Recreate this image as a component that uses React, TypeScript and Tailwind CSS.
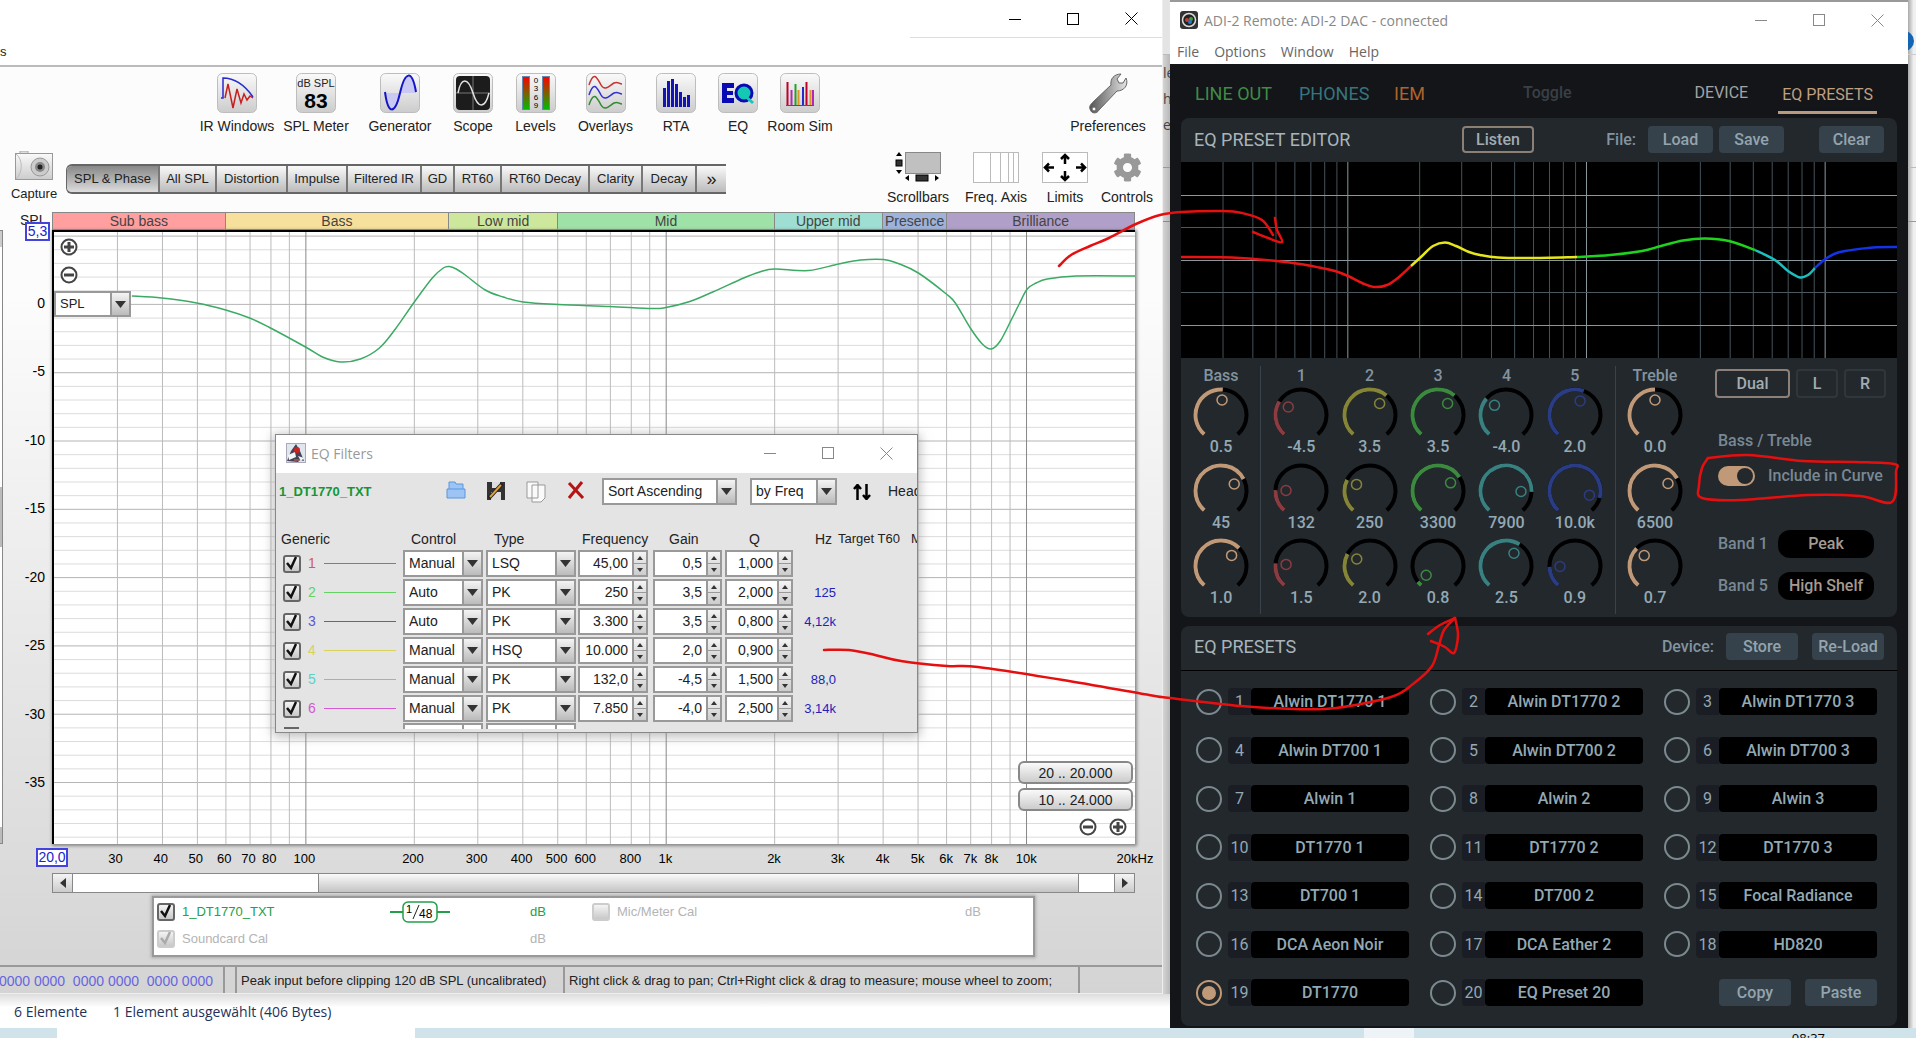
import React, { useId } from 'react'
import clsx from 'clsx'
import { FaCog } from 'react-icons/fa'

type Point = [number, number]

// Catmull-Rom spline through the given points
const smooth = (pts: Point[]) => {
    let d = `M${pts[0][0]} ${pts[0][1]}`
    for (let i = 0; i < pts.length - 1; i++) {
        const p0 = pts[i - 1] ?? pts[i]
        const p1 = pts[i]
        const p2 = pts[i + 1]
        const p3 = pts[i + 2] ?? p2
        d += ` C${p1[0] + (p2[0] - p0[0]) / 6} ${p1[1] + (p2[1] - p0[1]) / 6}`
        d += ` ${p2[0] - (p3[0] - p1[0]) / 6} ${p2[1] - (p3[1] - p1[1]) / 6} ${p2[0]} ${p2[1]}`
    }
    return d
}

const freqPos = (f: number) => (Math.log10(f / 20) / 3) * 100
const dbPos = (db: number) => ((5.3 - db) / 44.8) * 100

const decades = [10, 100, 1000, 10000]
const gridFreqs = decades
    .flatMap((d) => [1, 2, 3, 4, 5, 6, 7, 8, 9].map((n) => n * d))
    .filter((f) => f > 20 && f < 20000)

const freqLabels: [number, string][] = [
    [30, '30'], [40, '40'], [50, '50'], [60, '60'], [70, '70'], [80, '80'], [100, '100'],
    [200, '200'], [300, '300'], [400, '400'], [500, '500'], [600, '600'], [800, '800'],
    [1000, '1k'], [2000, '2k'], [3000, '3k'], [4000, '4k'], [5000, '5k'], [6000, '6k'],
    [7000, '7k'], [8000, '8k'], [10000, '10k'],
]

const bands = [
    { name: 'Sub bass', grow: 173, color: 'bg-[#ff9f9f]' },
    { name: 'Bass', grow: 224, color: 'bg-[#f7e09c]' },
    { name: 'Low mid', grow: 109, color: 'bg-[#cde89c]' },
    { name: 'Mid', grow: 217, color: 'bg-[#9fe2a8]' },
    { name: 'Upper mid', grow: 108, color: 'bg-[#9fded2]' },
    { name: 'Presence', grow: 64, color: 'bg-[#9fb2da]' },
    { name: 'Brilliance', grow: 188, color: 'bg-[#b09fc8]' },
]

const response: Point[] = [
    [131, 296], [161, 298], [196, 303], [225, 310], [249, 318], [268, 327], [305, 347], [322, 357],
    [340, 362], [360, 359], [379, 348], [395, 329], [414, 302], [432, 278], [443, 268], [449, 266.5], [456, 269],
    [465, 275], [485, 290], [503, 297], [523, 302], [558, 304.5], [610, 306.5], [652, 308.5], [666, 307.5],
    [690, 301.5], [713, 292], [744, 278], [760, 272], [775, 269], [809, 270.5], [839, 264], [861, 260],
    [884, 259.5], [900, 264], [919, 273], [947, 294], [956, 303], [971, 328], [983, 344], [992, 349],
    [1001, 341], [1012, 320], [1020, 304], [1028, 289], [1037, 283], [1048, 279], [1077, 276], [1136, 276],
]

const WindowControls = ({ className, dark }: { className?: string; dark?: boolean }) => (
    <div className={clsx('flex items-center', dark ? 'text-black' : 'text-[#888]', className)}>
        <button aria-label="Minimize" className="w-[58px] flex justify-center">
            <svg width="12" height="12"><path d="M0 6.5H12" stroke="currentColor" /></svg>
        </button>
        <button aria-label="Maximize" className="w-[58px] flex justify-center">
            <svg width="12" height="12"><rect x=".5" y=".5" width="11" height="11" fill="none" stroke="currentColor" /></svg>
        </button>
        <button aria-label="Close" className="w-[58px] flex justify-center">
            <svg width="13" height="13"><path d="M.5 .5L12.5 12.5M12.5 .5L.5 12.5" stroke="currentColor" /></svg>
        </button>
    </div>
)

const Tile = ({ children }: { children: React.ReactNode }) => (
    <svg width="40" height="40" viewBox="0 0 40 40">
        <rect x=".5" y=".5" width="39" height="39" rx="5" fill="url(#tile)" stroke="#bdbdbd" />
        {children}
    </svg>
)

const tools = [
    {
        name: 'IR Windows', width: 'w-[80px]',
        icon: <Tile>
            <path d="M4 25H6V5C16 5 27 11 36 24" fill="none" stroke="#2a2ad0" strokeWidth="1.5" />
            <path d="M8 25L11 11L16 35L20 16L24 30L27 21L30 27L33 23L36 25" fill="none" stroke="#c81e1e" strokeWidth="1.5" />
        </Tile>,
    },
    {
        name: 'SPL Meter', width: 'w-[78px]',
        icon: <Tile>
            <text x="20" y="14" textAnchor="middle" fontSize="11" fill="#222">dB SPL</text>
            <text x="20" y="35" textAnchor="middle" fontSize="21" fontWeight="bold">83</text>
        </Tile>,
    },
    {
        name: 'Generator', width: 'w-[90px]',
        icon: <Tile>
            <path d="M5 20C8 40 15 40 20 20Z M20 20C25 -2 32 -2 36 20Z" fill="#c9c9f4" />
            <path d="M5 19C8 42 15 42 20 20S32 -4 36 19" fill="none" stroke="#1414c8" strokeWidth="2" />
        </Tile>,
    },
    {
        name: 'Scope', width: 'w-[56px]',
        icon: <Tile>
            <rect x="3" y="3" width="34" height="34" rx="4" fill="#1c1c1c" />
            <path d="M3 20H37M20 3V37" stroke="#777" />
            <path d="M5 20C8 4 15 4 20 20S32 36 36 20" fill="none" stroke="#e2e2e2" strokeWidth="1.5" />
        </Tile>,
    },
    {
        name: 'Levels', width: 'w-[69px]',
        icon: <Tile>
            <rect x="6.500" y="3.500" width="7" height="33" fill="url(#level)" stroke="#68a" />
            <rect x="26.500" y="3.500" width="7" height="33" fill="url(#level)" stroke="#68a" />
            <text x="20" y="10" textAnchor="middle" fontSize="8">0</text>
            <text x="20" y="18" textAnchor="middle" fontSize="8">3</text>
            <text x="20" y="27" textAnchor="middle" fontSize="8">6</text>
            <text x="20" y="35" textAnchor="middle" fontSize="8">9</text>
        </Tile>,
    },
    {
        name: 'Overlays', width: 'w-[71px]',
        icon: <Tile>
            <path d="M3 12C8 -3 11 5 15 12S24 12 28 10S33 11 36 11" fill="none" stroke="#c83232" strokeWidth="1.500" />
            <path d="M3 22C8 7 11 15 15 22S24 22 28 20S33 21 36 21" fill="none" stroke="#3232d0" strokeWidth="1.500" />
            <path d="M3 32C8 17 11 25 15 32S24 32 28 30S33 31 36 31" fill="none" stroke="#328c32" strokeWidth="1.500" />
        </Tile>,
    },
    {
        name: 'RTA', width: 'w-[70px]',
        icon: <Tile>
            <path d="M8.500 34V15M12.500 34V8M16.500 34V6M20.500 34V11M24.500 34V19M28.500 34V24M32.500 34V22" stroke="#1414b4" strokeWidth="3" />
        </Tile>,
    },
    {
        name: 'EQ', width: 'w-[54px]',
        icon: <Tile>
            <path d="M4 10H16V15H9V18H15V22H9V25H16V30H4Z" fill="#0a0ab4" />
            <circle cx="26" cy="20" r="8" fill="#14c8b4" stroke="#0a0ab4" strokeWidth="3" />
            <path d="M26 22L35 30" stroke="#14c8b4" strokeWidth="3" />
        </Tile>,
    },
    {
        name: 'Room Sim', width: 'w-[70px]',
        icon: <Tile>
            <path d="M7.500 32V9M26.500 32V9" stroke="#c00028" strokeWidth="2" />
            <path d="M11.500 32V17M33 32V17" stroke="#b428b4" strokeWidth="2" />
            <path d="M15.500 32V11" stroke="#28a028" strokeWidth="2" />
            <path d="M18.500 32V17M30.500 32V17" stroke="#dc9628" strokeWidth="2" />
            <path d="M23 32V14" stroke="#2828c8" strokeWidth="2" />
            <path d="M6 32.500H34" stroke="#555" />
        </Tile>,
    },
]

const Wrench = () => (
    <svg width="42" height="42" viewBox="0 0 42 42">
        <path
            d="M3 36C2 33 4 31 6 29L24 12C23 6 27 1 34 1L30 6L32 10L36 10L39 5C42 12 37 18 30 18L12 37C10 41 4 41 3 36Z"
            fill="url(#metal)" stroke="#666" />
        <circle cx="7" cy="36" r="2" fill="#fafafa" stroke="#666" />
    </svg>
)

const Camera = () => (
    <svg width="38" height="30" viewBox="0 0 38 30">
        <rect x="5" y="0" width="8" height="4" fill="#ddd" stroke="#aaa" />
        <rect x=".5" y="2.500" width="37" height="26" fill="url(#tile)" stroke="#999" />
        <path d="M1 3C8 8 8 22 1 28" fill="none" stroke="#bbb" />
        <circle cx="25" cy="16" r="9" fill="#ccc" stroke="#999" />
        <circle cx="25" cy="16" r="5" fill="#888" />
        <circle cx="25" cy="16" r="2.500" fill="#222" />
    </svg>
)

const chartTools = [
    {
        name: 'Scrollbars', width: 'w-[78px]',
        icon: <svg width="46" height="31" viewBox="0 0 46 31">
            <rect x="10.500" y=".5" width="35" height="21" fill="#c0c0c0" stroke="#888" />
            <path d="M1 4L4 0L7 4ZM1 18L4 22L7 18ZM14 23V29L10 26ZM40 23V29L44 26Z" />
            <rect x="1" y="8" width="6" height="6" fill="#333" stroke="#000" />
            <rect x="21" y="23" width="12" height="6" fill="#333" stroke="#000" />
        </svg>,
    },
    {
        name: 'Freq. Axis', width: 'w-[78px]',
        icon: <svg width="46" height="31" viewBox="0 0 46 31">
            <rect x=".5" y=".5" width="45" height="30" fill="#fff" stroke="#bbb" />
            <path d="M17.500 1V30M27.500 1V30M35.500 1V30M40.500 1V30" stroke="#bbb" />
        </svg>,
    },
    {
        name: 'Limits', width: 'w-[60px]',
        icon: <svg width="46" height="31" viewBox="0 0 46 31">
            <rect x=".5" y=".5" width="45" height="30" fill="#fff" stroke="#bbb" />
            <path d="M23 12V4M19 7L23 3L27 7M23 19V27M19 24L23 28L27 24M12 15.500H4M7 11.500L3 15.500L7 19.500M34 15.500H42M39 11.500L43 15.500L39 19.500" fill="none" stroke="#000" strokeWidth="2.500" />
        </svg>,
    },
    {
        name: 'Controls', width: 'w-[64px]',
        icon: <span className="h-[31px] flex items-center"><FaCog size={29} color="#999" /></span>,
    },
]

const tabs = [
    ['SPL & Phase', 'w-[93px]'], ['All SPL', 'w-[57px]'], ['Distortion', 'w-[71px]'],
    ['Impulse', 'w-[60px]'], ['Filtered IR', 'w-[74px]'], ['GD', 'w-[33px]'], ['RT60', 'w-[47px]'],
    ['RT60 Decay', 'w-[88px]'], ['Clarity', 'w-[53px]'], ['Decay', 'w-[54px]'],
]

const Check = ({ disabled, checked = true, label }: { disabled?: boolean; checked?: boolean; label: React.ReactNode }) => {
    const id = useId()
    return (
        <span className="flex items-center gap-[7px]">
            <span className="grid shrink-0">
                <input
                    id={id} type="checkbox" defaultChecked={checked} disabled={disabled}
                    className={clsx(
                        'col-start-1 row-start-1 size-[18px] appearance-none rounded-[3px] border-2 bg-linear-to-b from-[#f4f4f4] to-[#c8c8c8]',
                        disabled ? 'border-[#ccc]' : 'border-[#666]')}
                />
                {checked && (
                    <svg className="col-start-1 row-start-1 pointer-events-none" width="18" height="18">
                        <path d="M4 8L8 13L13 2" fill="none" stroke={disabled ? '#aaa' : '#111'} strokeWidth="2.500" />
                    </svg>
                )}
            </span>
            <label htmlFor={id}>{label}</label>
        </span>
    )
}

const Combo = ({ value, label, className }: { value: string; label: string; className?: string }) => (
    <span className={clsx('block border-2 border-[#999] bg-white', className)}>
        <select aria-label={label} className="block size-full appearance-none pl-1 outline-none">
            <option>{value}</option>
        </select>
        <span className="absolute inset-y-0 right-0 w-[19px] border-l-2 border-[#999] bg-linear-to-b from-[#f4f4f4] to-[#bbb] pointer-events-none flex items-center justify-center">
            <svg width="11" height="7"><path d="M0 0H11L5.500 7Z" fill="#333" /></svg>
        </span>
    </span>
)

const Spinner = ({ value, label, className }: { value: string; label: string; className?: string }) => (
    <span className={clsx('flex h-[27px] border-2 border-[#999] bg-white', className)}>
        <input aria-label={label} defaultValue={value} className="min-w-0 flex-1 text-right pr-1 outline-none" />
        <span className="flex flex-col w-[14px] border-l-2 border-[#999] bg-linear-to-b from-[#f4f4f4] to-[#ccc]">
            <button aria-label={`${label} up`} className="flex-1 flex items-center justify-center border-b border-[#999]">
                <svg width="6" height="4"><path d="M0 4H6L3 0Z" fill="#333" /></svg>
            </button>
            <button aria-label={`${label} down`} className="flex-1 flex items-center justify-center">
                <svg width="6" height="4"><path d="M0 0H6L3 4Z" fill="#333" /></svg>
            </button>
        </span>
    </span>
)

const ZoomButton = ({ plus }: { plus?: boolean }) => (
    <button aria-label={plus ? 'Zoom in' : 'Zoom out'} className="block">
        <svg width="18" height="18">
            <circle cx="9" cy="9" r="7.500" fill="#fff" stroke="#444" strokeWidth="2" />
            <path d={plus ? 'M4 9H14M9 4V14' : 'M4 9H14'} stroke="#444" strokeWidth="3" />
        </svg>
    </button>
)

const Plot = () => (
    <div className="relative border-l-2 border-t-2 border-black bg-white shadow-[1px_1px_3px_1px_#888]">
        <svg className="absolute inset-0 size-full">
            {Array.from({ length: 45 }, (_, i) => 5 - i).map((db) => (
                <line
                    key={db} x1="0" x2="100%" y1={`${dbPos(db)}%`} y2={`${dbPos(db)}%`}
                    stroke={db % 5 === 0 ? '#b4b4b4' : '#dcdcdc'} />
            ))}
            {gridFreqs.map((f) => (
                <line
                    key={f} x1={`${freqPos(f)}%`} x2={`${freqPos(f)}%`} y1="0" y2="100%"
                    stroke={decades.includes(f) ? '#888' : '#bcbcbc'} />
            ))}
            <svg viewBox="53 232 1083 612" preserveAspectRatio="none" width="100%" height="100%">
                <path d={smooth(response)} fill="none" stroke="#3caa64" strokeWidth="1.500" vectorEffect="non-scaling-stroke" />
            </svg>
        </svg>
        <div className="absolute left-[6px] top-[6px] flex flex-col gap-[10px]">
            <ZoomButton plus />
            <ZoomButton />
        </div>
        <Combo value="SPL" label="Trace axis" className="absolute left-0 top-[59px] w-[77px] h-[26px] text-[13px]" />
        <div className="absolute right-[2px] bottom-2 flex flex-col items-end gap-1">
            {['20 .. 20.000', '10 .. 24.000'].map((range) => (
                <button key={range} className="w-[115px] h-[23px] rounded-md border-2 border-[#888] bg-linear-to-b from-[#fafafa] to-[#ccc] text-[14px] leading-none">
                    {range}
                </button>
            ))}
            <div className="flex gap-3 pt-[3px] pr-[6px]">
                <ZoomButton />
                <ZoomButton plus />
            </div>
        </div>
    </div>
)

const RoomWindow = () => (
    <section className="flex-1 min-w-0 flex flex-col text-[#222] font-['Liberation_Sans',Arial,sans-serif] border-b border-r border-[#eee]">
        <header className="bg-white h-[65px] shrink-0">
            <div className="flex justify-end h-[38px]">
                <div className="w-[252px] border-b border-[#ddd] flex justify-end">
                    <WindowControls dark className="pr-[2px]" />
                </div>
            </div>
            <span className="block text-[13px] leading-7">s</span>
        </header>
        <div className="flex-1 min-h-0 flex flex-col border-t-2 border-[#bbb] bg-linear-to-b from-[#fcfcfc] from-25% to-[#d4d4d4]">
            <div className="flex justify-between pt-[6px] pl-[197px] pr-[15px] text-[14px] leading-5">
                <div className="flex">
                    {tools.map((tool) => (
                        <button key={tool.name} className={clsx('flex flex-col items-center gap-[3px] whitespace-nowrap', tool.width)}>
                            {tool.icon}
                            {tool.name}
                        </button>
                    ))}
                </div>
                <button className="flex flex-col items-center gap-px w-[78px]">
                    <Wrench />
                    Preferences
                </button>
            </div>
            <div className="flex items-end mt-[15px] pr-[3px] text-[13px] leading-5">
                <button className="w-[66px] flex flex-col items-center pb-1 pl-[2px] gap-[3px]">
                    <Camera />
                    Capture
                </button>
                <nav className="flex h-[30px] mb-[14px] border-y-2 border-[#666] border-l rounded-l-md overflow-hidden bg-linear-to-b from-[#fafafa] to-[#bbb]">
                    {tabs.map(([name, width], i) => (
                        <button
                            key={name}
                            className={clsx('border-r-2 border-[#777] whitespace-nowrap', width,
                                i === 0 && 'bg-linear-to-b from-[#888] to-[#ddd]')}>
                            {name}
                        </button>
                    ))}
                    <button aria-label="More graphs" className="w-[29px] text-lg leading-none">»</button>
                </nav>
                <div className="flex ml-auto">
                    {chartTools.map((tool) => (
                        <button key={tool.name} className={clsx('flex flex-col items-center gap-1 pb-px text-[14px] whitespace-nowrap', tool.width)}>
                            {tool.icon}
                            {tool.name}
                        </button>
                    ))}
                </div>
            </div>

            <div className="flex-1 min-h-0 mt-1 grid grid-cols-[52px_1fr_27px] grid-rows-[18px_1fr_29px]">
                <span className="text-[14px] leading-4 pl-5">SPL</span>
                <div className="flex border-y border-l border-[#888] text-[14px] leading-4 text-[#444]">
                    {bands.map((band) => (
                        <div
                            key={band.name} style={{ flexGrow: band.grow }}
                            className={clsx('basis-0 min-w-0 text-center border-r border-[#888] whitespace-nowrap', band.color)}>
                            {band.name}
                        </div>
                    ))}
                </div>
                <span />

                <div className="relative">
                    <div className="absolute left-0 inset-y-0 w-[3px] border-r border-y border-[#888] bg-white flex flex-col">
                        <span className="h-4 bg-[#ccc]" />
                        <span className="h-[60px] mt-[240px] bg-[#bbb]" />
                        <span className="h-4 mt-auto bg-[#bbb]" />
                    </div>
                    <svg className="size-full text-[14px]">
                        {[0, -5, -10, -15, -20, -25, -30, -35].map((db) => (
                            <text key={db} x="45" y={`${dbPos(db)}%`} dy="5" textAnchor="end">{db}</text>
                        ))}
                    </svg>
                    <input
                        aria-label="Upper limit" defaultValue="5,3"
                        className="absolute right-[2px] -top-2 w-[25px] h-[19px] border-2 border-[#44d] bg-white text-[#22c] text-[14px] text-center" />
                </div>
                <Plot />
                <span />

                <span />
                <div className="relative">
                    <svg className="size-full text-[13px] overflow-visible">
                        {freqLabels.map(([f, text]) => (
                            <text key={f} x={`${freqPos(f)}%`} y="19" textAnchor="middle">{text}</text>
                        ))}
                        <text x="100%" y="19" textAnchor="middle">20kHz</text>
                    </svg>
                    <input
                        aria-label="Lower limit" defaultValue="20,0"
                        className="absolute -left-4 top-1 w-8 h-[19px] border-2 border-[#44d] bg-white text-[#22c] text-[14px] text-center" />
                </div>
            </div>

            <div className="flex h-5 shrink-0 ml-[52px] mr-[27px] border border-[#888] bg-white">
                <button aria-label="Scroll left" className="w-5 border-r border-[#888] bg-linear-to-b from-[#f4f4f4] to-[#ccc] flex items-center justify-center">
                    <svg width="6" height="10"><path d="M6 0V10L0 5Z" fill="#333" /></svg>
                </button>
                <div className="w-[245px]" />
                <div className="flex-1 border-x border-[#888] bg-linear-to-b from-[#fafafa] to-[#c4c4c4]" />
                <div className="w-[35px]" />
                <button aria-label="Scroll right" className="w-5 border-l border-[#888] bg-linear-to-b from-[#f4f4f4] to-[#ccc] flex items-center justify-center">
                    <svg width="6" height="10"><path d="M0 0V10L6 5Z" fill="#333" /></svg>
                </button>
            </div>

            <div className="ml-[152px] mr-[127px] mt-[3px] mb-2 h-[61px] shrink-0 border-2 border-[#999] bg-white shadow-[0_0_3px_1px_#aaa] text-[13px] leading-4 grid grid-cols-[209px_164px_62px_373px_1fr] grid-rows-2 items-center pl-[3px] pb-[2px] text-[#b4b4b4]">
                <span className="text-[#22a04a]"><Check label="1_DT1770_TXT" /></span>
                <span className="pl-[24px]">
                    <svg width="60" height="22" viewBox="0 0 60 22">
                        <path d="M0 11H60" stroke="#22a04a" strokeWidth="2" />
                        <rect x="13" y="1" width="34" height="20" rx="5" fill="#fff" stroke="#22a04a" strokeWidth="1.500" />
                        <text x="16" y="12" fontSize="11">1</text>
                        <path d="M23 18L29 4" stroke="#222" />
                        <text x="29" y="17" fontSize="12">48</text>
                    </svg>
                </span>
                <span className="text-[#22a04a]">dB</span>
                <Check disabled checked={false} label="Mic/Meter Cal" />
                <span>dB</span>
                <Check disabled label="Soundcard Cal" />
                <span />
                <span>dB</span>
            </div>

            <footer className="flex h-[28px] shrink-0 border-t-2 border-[#999] text-[13px] leading-7 whitespace-pre">
                <span className="w-[225px] flex justify-end pr-[10px] border-r-2 border-[#999] text-[#6666e0] text-[14px] overflow-hidden">0000 0000  0000 0000  0000 0000</span>
                <span className="w-3 border-r-2 border-[#999]" />
                <span className="w-[328px] pl-1 border-r-2 border-[#999]">Peak input before clipping 120 dB SPL (uncalibrated)</span>
                <span className="w-[515px] pl-1 border-r-2 border-[#999]">Right click &amp; drag to pan; Ctrl+Right click &amp; drag to measure; mouse wheel to zoom;</span>
            </footer>
        </div>
    </section>
)

const filters = [
    { color: '#d25a5a', control: 'Manual', type: 'LSQ', freq: '45,00', gain: '0,5', q: '1,000', hz: '' },
    { color: '#64d264', control: 'Auto', type: 'PK', freq: '250', gain: '3,5', q: '2,000', hz: '125' },
    { color: '#5a5ad2', control: 'Auto', type: 'PK', freq: '3.300', gain: '3,5', q: '0,800', hz: '4,12k' },
    { color: '#d8d25a', control: 'Manual', type: 'HSQ', freq: '10.000', gain: '2,0', q: '0,900', hz: '' },
    { color: '#5ad2c8', control: 'Manual', type: 'PK', freq: '132,0', gain: '-4,5', q: '1,500', hz: '88,0' },
    { color: '#d25ad2', control: 'Manual', type: 'PK', freq: '7.850', gain: '-4,0', q: '2,500', hz: '3,14k' },
]

const FiltersDialog = () => (
    <section className="absolute left-[275px] top-[434px] w-[643px] h-[299px] border border-[#888] bg-[#e4e4e4] shadow-[0_2px_10px_2px_#8888] overflow-hidden text-[14px] text-[#222] font-['Liberation_Sans',Arial,sans-serif]">
        <header className="bg-white h-[38px] flex items-center pl-[10px] pb-[2px] text-[#999] font-['Open_Sans','Noto_Sans',sans-serif]">
            <svg width="20" height="20" className="mr-[5px]">
                <rect x=".5" y=".5" width="19" height="19" fill="#dfe6ee" stroke="#aab" />
                <path d="M1 18L5 8L10 1L14 8L18 18L14 17L12 19Z" fill="#445" />
                <path d="M2 12L9 9L10 14L3 17ZM12 13L18 15L15 18Z" fill="#f4f6f8" />
                <circle cx="11" cy="7" r="3" fill="#c22" />
                <path d="M8 17H14" stroke="#c66" />
            </svg>
            EQ Filters
            <WindowControls className="ml-auto pr-[2px]" />
        </header>
        <div className="flex items-center h-[27px] mt-[5px] pl-[3px] whitespace-nowrap">
            <span className="w-[156px] shrink-0 font-bold text-[13px] text-[#149637]">1_DT1770_TXT</span>
            <div className="flex w-[167px] shrink-0">
                <button aria-label="Open" className="w-[41px] flex justify-center">
                    <svg width="20" height="18"><path d="M3 8V1H9L10 3H17V8M1 8H19V17H1Z" fill="#9cc4f4" stroke="#5a96dc" /></svg>
                </button>
                <button aria-label="Save" className="w-10 flex justify-center">
                    <svg width="20" height="20">
                        <path d="M1 1H19V19H1Z" fill="#333" />
                        <path d="M6 1H14V7H6ZM5 11H15V19H5Z" fill="#ddd" />
                        <path d="M3 17L16 3" stroke="#222" strokeWidth="4" />
                        <path d="M4 16L15 4" stroke="#dca03c" strokeWidth="2" />
                    </svg>
                </button>
                <button aria-label="Copy" className="w-10 flex justify-center">
                    <svg width="20" height="22">
                        <path d="M1 1H12V17H1ZM6 4H19V17L15 21H6Z" fill="#fafafa" stroke="#999" />
                    </svg>
                </button>
                <button aria-label="Delete" className="w-10 flex justify-center">
                    <svg width="20" height="18"><path d="M3 2L17 17M16 1L3 17" stroke="#b41414" strokeWidth="3" /></svg>
                </button>
            </div>
            <Combo value="Sort Ascending" label="Sort order" className="relative w-[135px] h-[27px] shrink-0" />
            <Combo value="by Freq" label="Sort key" className="relative w-[87px] h-[27px] ml-[13px] shrink-0" />
            <button aria-label="Swap" className="ml-[16px] mr-[17px] shrink-0">
                <svg width="18" height="16"><path d="M4.500 16V2M1 5L4.500 1L8 5M13.500 0V14M10 11L13.500 15L17 11" fill="none" stroke="#000" strokeWidth="2.500" /></svg>
            </button>
            Head
        </div>
        <table className="table-fixed w-[680px] mt-[24px] text-left">
            <thead>
                <tr className="h-[20px] leading-5 whitespace-nowrap *:font-normal">
                    <th className="w-[127px] pl-[5px]">Generic</th>
                    <th className="w-[83px] pl-2">Control</th>
                    <th className="w-[92px] pl-2">Type</th>
                    <th className="w-[75px] pl-1">Frequency</th>
                    <th className="w-[72px] pl-4">Gain</th>
                    <th className="w-[70px] pl-6">Q</th>
                    <th className="w-[43px] pr-[6px] text-right">Hz</th>
                    <th className="w-[73px] text-[13px]">Target T60</th>
                    <th className="text-[13px]">M</th>
                </tr>
            </thead>
            <tbody>
                {filters.map((f, i) => (
                    <tr key={i} className="h-[29px]">
                        <td className="pl-[7px]">
                            <span className="flex items-center gap-2" style={{ color: f.color }}>
                                <Check label={i + 1} />
                                <span className="h-px w-[72px]" style={{ background: f.color }} />
                            </span>
                        </td>
                        <td><Combo value={f.control} label={`Control ${i + 1}`} className="relative w-[80px] h-[27px]" /></td>
                        <td><Combo value={f.type} label={`Type ${i + 1}`} className="relative w-[90px] h-[27px]" /></td>
                        <td><Spinner value={f.freq} label={`Frequency ${i + 1}`} className="w-[70px]" /></td>
                        <td><Spinner value={f.gain} label={`Gain ${i + 1}`} className="w-[69px]" /></td>
                        <td><Spinner value={f.q} label={`Q ${i + 1}`} className="w-[68px]" /></td>
                        <td className="text-right text-[13px] text-[#22b] pr-[2px]">{f.hz}</td>
                    </tr>
                ))}
            </tbody>
        </table>
        {/* top edge of the row below the fold */}
        <div className="flex h-[6px] pl-[7px]">
            <span className="w-[15px] h-2 border-t-2 border-[#666] ml-px mr-[104px] mt-1" />
            <span className="w-[80px] border-2 border-b-0 border-[#999] bg-white mr-[3px] flex justify-end"><span className="w-[19px] border-l-2 border-[#999]" /></span>
            <span className="w-[90px] border-2 border-b-0 border-[#999] bg-white flex justify-end"><span className="w-[19px] border-l-2 border-[#999]" /></span>
        </div>
    </section>
)

const START = -139

const arc = (from: number, to: number) => {
    const at = (deg: number) => {
        const r = (deg * Math.PI) / 180
        return `${28 + 25.5 * Math.sin(r)} ${28 - 25.5 * Math.cos(r)}`
    }
    return `M${at(from)} A25.5 25.5 0 ${to - from > 180 ? 1 : 0} 1 ${at(to)}`
}

const Knob = ({ angle, value, color }: { angle: number; value: string; color: string }) => {
    const r = (angle * Math.PI) / 180
    return (
        <div className="flex flex-col items-center h-[76px]">
            <svg width="56" height="50" viewBox="0 0 56 50">
                <path d={arc(START, -START)} fill="none" stroke="#000" strokeWidth="4" />
                <path d={arc(START, angle)} fill="none" stroke={color} strokeWidth="4" />
                <circle cx={28 + 15 * Math.sin(r)} cy={28 - 15 * Math.cos(r)} r="5" fill="none" stroke={color} strokeWidth="1.500" />
            </svg>
            <span className="leading-5 text-[#93a9b4]">{value}</span>
        </div>
    )
}

type KnobColumn = { name: string; color: string; knobs: [number, string][] }

const eqBands: KnobColumn[] = [
    { name: '1', color: '#8a3c40', knobs: [[-58, '-4.5'], [-88, '132'], [-84, '1.5']] },
    { name: '2', color: '#85853a', knobs: [[40, '3.5'], [-64, '250'], [-62, '2.0']] },
    { name: '3', color: '#3c8a40', knobs: [[40, '3.5'], [57, '3300'], [-128, '0.8']] },
    { name: '4', color: '#3a8080', knobs: [[-50, '-4.0'], [92, '7900'], [32, '2.5']] },
    { name: '5', color: '#2a3c84', knobs: [[20, '2.0'], [106, '10.0k'], [-92, '0.9']] },
]

const bass: KnobColumn = { name: 'Bass', color: '#c09a78', knobs: [[4, '0.5'], [62, '45'], [45, '1.0']] }
const treble: KnobColumn = { name: 'Treble', color: '#c09a78', knobs: [[0, '0.0'], [60, '6500'], [-46, '0.7']] }

const KnobStack = ({ name, color, knobs }: KnobColumn) => (
    <div className="flex-1 flex flex-col items-center">
        <span className="leading-5 mb-px text-[#8294a0]">{name}</span>
        {knobs.map(([angle, value], i) => <Knob key={i} angle={angle} value={value} color={color} />)}
    </div>
)

const DacButton = ({ children, className }: { children: React.ReactNode; className?: string }) => (
    <button className={clsx('h-[27px] rounded bg-[#36424b] text-[#93a4ae]', className)}>{children}</button>
)

const dacCurve: { color: string; pts: Point[] }[] = [
    { color: '#e61414', pts: [[1181, 257], [1232, 257.5], [1276, 261], [1300, 264], [1319, 267.500], [1335, 271], [1348, 276], [1362, 283], [1374, 287], [1387, 285], [1399, 277], [1411, 266]] },
    { color: '#e6e61e', pts: [[1411, 266], [1422, 256], [1433, 246], [1445, 242.5], [1456, 246], [1469, 252], [1480, 255], [1498, 257.500], [1530, 258], [1577, 257]] },
    { color: '#1ed21e', pts: [[1577, 257], [1610, 255], [1642, 251], [1661, 246], [1683, 240.500], [1705, 238.500], [1729, 241], [1755, 250]] },
    { color: '#1ebebe', pts: [[1755, 250], [1775, 260], [1788, 271], [1800, 277.500], [1808, 275], [1815, 268]] },
    { color: '#1432e6', pts: [[1815, 268], [1824, 260], [1834, 254], [1845, 251], [1873, 247.500], [1897, 247]] },
]

const DacGraph = () => (
    <svg className="block w-full h-[196px] bg-black">
        {gridFreqs.map((f) => (
            <line
                key={f} x1={`${freqPos(f)}%`} x2={`${freqPos(f)}%`} y1="0" y2="100%"
                stroke={decades.includes(f) ? '#8a989e' : '#44525a'} />
        ))}
        {[33.500, 65.500, 98.500, 130.500, 163.500].map((y, i) => (
            <line key={y} x1="0" x2="100%" y1={y} y2={y} stroke={i % 2 ? '#4c5a60' : '#8a989e'} />
        ))}
        <svg viewBox="1181 162 716 196" preserveAspectRatio="none" width="100%" height="100%">
            {dacCurve.map(({ color, pts }) => (
                <path key={color} d={smooth(pts)} fill="none" stroke={color} strokeWidth="2.500" />
            ))}
        </svg>
    </svg>
)

const presets = [
    'Alwin DT1770 1', 'Alwin DT1770 2', 'Alwin DT1770 3', 'Alwin DT700 1', 'Alwin DT700 2', 'Alwin DT700 3',
    'Alwin 1', 'Alwin 2', 'Alwin 3', 'DT1770 1', 'DT1770 2', 'DT1770 3', 'DT700 1', 'DT700 2', 'Focal Radiance',
    'DCA Aeon Noir', 'DCA Eather 2', 'HD820', 'DT1770', 'EQ Preset 20',
]

const RemoteWindow = () => (
    <section className="w-[738px] shrink-0 flex flex-col border-t-2 border-[#999] bg-[#131519]">
        <header className="bg-white h-[62px] shrink-0 text-[14px] font-['Open_Sans','Noto_Sans',sans-serif]">
            <div className="flex items-center h-[36px] pl-[10px] text-[#888]">
                <svg width="18" height="18" className="mr-[6px]">
                    <rect width="18" height="18" rx="3" fill="#333" />
                    <circle cx="9" cy="9" r="6.500" fill="#222" stroke="#ddd" strokeWidth="1.500" />
                    <circle cx="7" cy="9" r="2" fill="#c83c28" />
                    <circle cx="11" cy="8" r="2" fill="#3ca03c" />
                    <circle cx="10" cy="11" r="2" fill="#2878c8" />
                </svg>
                ADI-2 Remote: ADI-2 DAC - connected
                <WindowControls className="ml-auto pr-[2px]" />
            </div>
            <nav className="flex gap-[15px] pl-[7px] leading-7 text-[#666]">
                <button>File</button>
                <button>Options</button>
                <button>Window</button>
                <button>Help</button>
            </nav>
        </header>

        <div className="flex-1 flex flex-col px-[11px] text-[16px] font-medium font-['Roboto',sans-serif]">
            <nav className="flex items-center h-[54px] shrink-0 pl-[14px] pr-5 text-[18px] font-normal">
                <button className="w-[78px] pt-1 text-left whitespace-nowrap text-[#418a46]">LINE OUT</button>
                <button className="w-[70px] pt-1 ml-[26px] text-left text-[#37747e]">PHONES</button>
                <button className="pt-1 ml-[25px] text-[#b0622a]">IEM</button>
                <button className="pt-1 ml-auto text-[16px] font-medium text-[#3a4045]">Toggle</button>
                <button className="pt-1 ml-[123px] text-[16px] text-[#a4a4a4]">DEVICE</button>
                <button className="ml-[30px] px-1 pt-[14px] pb-1 border-b-3 border-[#b79a80] text-[16px] text-[#c0a080]">EQ PRESETS</button>
            </nav>

            <div className="rounded-lg bg-[#23282d] overflow-hidden shrink-0">
                <div className="flex items-center h-[44px] pb-px pl-[13px] pr-[13px] text-[#8294a0]">
                    <h2 className="w-[268px] text-[18px] font-normal text-[#a8b4ba]">EQ PRESET EDITOR</h2>
                    <button className="w-[72px] h-[27px] rounded border-2 border-[#8c7f76] text-[#a0acb2] leading-none">Listen</button>
                    <span className="ml-auto mr-3">File:</span>
                    <DacButton className="w-[65px]">Load</DacButton>
                    <DacButton className="w-[65px] ml-[6px]">Save</DacButton>
                    <DacButton className="w-[65px] ml-[35px]">Clear</DacButton>
                </div>
                <DacGraph />
                <div className="flex h-[259px] pt-2 pb-[3px]">
                    <div className="w-[80px] flex pl-[6px] pr-[5px] border-r border-[#3a434c]"><KnobStack {...bass} /></div>
                    <div className="w-[355px] flex px-[6px] border-r border-[#3a434c]">
                        {eqBands.map((band) => <KnobStack key={band.name} {...band} />)}
                    </div>
                    <div className="w-[76px] flex pl-1 pr-[2px]"><KnobStack {...treble} /></div>
                    <div className="pl-[23px] pt-[3px] text-[#788894]">
                        <div className="flex gap-[6px] text-[#a0acb2]">
                            <button className="w-[75px] h-[29px] rounded border-2 border-[#8c8079]">Dual</button>
                            <button className="w-[42px] h-[29px] rounded border-2 border-[#30363e]">L</button>
                            <button className="w-[42px] h-[29px] rounded border-2 border-[#30363e]">R</button>
                        </div>
                        <p className="mt-[33px] pl-[3px] leading-5">Bass / Treble</p>
                        <label className="flex items-center gap-[13px] mt-[15px] pl-[3px] leading-5 whitespace-nowrap">
                            <input type="checkbox" role="switch" defaultChecked className="peer sr-only" />
                            <span className="w-[37px] h-5 rounded-full bg-[#c09a78] flex items-center justify-end pr-[2px]">
                                <span className="size-4 rounded-full bg-[#23282d]" />
                            </span>
                            Include in Curve
                        </label>
                        <div className="flex items-center mt-[44px] pl-[3px]">
                            <span className="w-[60px]">Band 1</span>
                            <button className="w-[96px] h-7 rounded-xl bg-black text-[#a59a90]">Peak</button>
                        </div>
                        <div className="flex items-center mt-[14px] pl-[3px]">
                            <span className="w-[60px]">Band 5</span>
                            <button className="w-[96px] h-7 rounded-xl bg-black text-[#a59a90] whitespace-nowrap">High Shelf</button>
                        </div>
                    </div>
                </div>
            </div>

            <div className="flex-1 flex flex-col mt-[9px] mb-[2px] rounded-lg bg-[#23282d]">
                <div className="flex items-center h-[45px] pb-[3px] pl-[13px] pr-[13px] border-b border-black text-[#8294a0]">
                    <h2 className="text-[18px] font-normal text-[#a8b4ba]">EQ PRESETS</h2>
                    <span className="ml-auto mr-3">Device:</span>
                    <DacButton className="w-[72px]">Store</DacButton>
                    <DacButton className="w-[72px] ml-[14px]">Re-Load</DacButton>
                </div>
                <div className="flex-1 grid grid-cols-3 content-between gap-x-[21px] pt-[17px] pb-5 pl-[15px] pr-5">
                    {presets.map((name, i) => (
                        <label key={name} className="flex items-center h-[27px] text-[#93a9b4]">
                            <input
                                type="radio" name="preset" defaultChecked={i === 18}
                                className="size-[26px] shrink-0 appearance-none rounded-full border-2 border-[#7c8a90] checked:border-[#c09a78] checked:bg-[#c09a78] checked:bg-clip-content checked:p-[4px]" />
                            <span className="w-[23px] ml-[6px] h-full rounded-l bg-[#1a1d23] text-center leading-[27px] font-normal">{i + 1}</span>
                            <span className="flex-1 h-full rounded bg-black text-center leading-[27px] whitespace-nowrap">{name}</span>
                        </label>
                    ))}
                    <div className="flex justify-end gap-[14px]">
                        <DacButton className="w-[72px]">Copy</DacButton>
                        <DacButton className="w-[72px]">Paste</DacButton>
                    </div>
                </div>
            </div>
        </div>
    </section>
)

const strokes: Point[][] = [
    [[1059, 266], [1071, 255], [1090, 246], [1109, 238], [1136, 224], [1160, 215], [1181, 212], [1223, 211], [1242, 213], [1262, 220], [1273, 235]],
    [[1275, 218], [1277, 230], [1282, 242], [1268, 238], [1253, 232]],
    [[824, 650], [849, 650], [875, 655], [901, 661], [947, 666], [978, 667], [1063, 680], [1149, 695], [1170, 698], [1241, 706], [1294, 709], [1336, 708], [1391, 697], [1413, 684], [1432, 666], [1439, 645], [1444, 630], [1455, 618]],
    [[1428, 634], [1440, 625], [1455, 618]],
    [[1455, 618], [1458, 635], [1454, 653], [1445, 647], [1431, 641]],
    [[1708, 458], [1748, 455], [1803, 461], [1855, 462], [1894, 464], [1896, 472], [1892, 502], [1860, 496], [1808, 495], [1741, 500], [1702, 498], [1699, 485], [1702, 468], [1708, 458]],
]

const App = () => (
    <main className="relative h-screen flex flex-col overflow-hidden bg-white">
        <svg width="0" height="0" className="absolute">
            <linearGradient id="tile" x2="0" y2="1"><stop stopColor="#fafafa" /><stop offset="1" stopColor="#ccc" /></linearGradient>
            <linearGradient id="level" x2="0" y2="1"><stop stopColor="#f00" /><stop offset="1" stopColor="#0b0" /></linearGradient>
            <linearGradient id="metal"><stop stopColor="#555" /><stop offset="1" stopColor="#e4e4e4" /></linearGradient>
        </svg>
        <div className="flex-1 min-h-0 flex">
            <div className="relative flex-1 min-w-0 flex flex-col overflow-hidden">
                <div className="flex-1 min-h-0 flex">
                    <RoomWindow />
                    <div className="w-[7px] shrink-0 overflow-hidden bg-linear-to-r from-[#d4d4d4] to-[#b8b8b8] text-[14px] leading-[26px] text-[#444] font-['Open_Sans','Noto_Sans',sans-serif]">
                        <div className="h-[55px] bg-[#e4e4e4] border-b border-[#bbb]" />
                        <p className="pt-[5px]">le</p>
                        <p>h</p>
                        <p>e</p>
                        <div className="h-[30px] border-b border-[#999]" />
                        <div className="h-[54px] border-b border-[#888]" />
                    </div>
                </div>
                <FiltersDialog />
                <div className="h-[34px] shrink-0 flex items-center gap-[26px] pl-[14px] bg-linear-to-b from-[#ddd] to-white to-40% text-[14px] text-[#1e325a] font-['Open_Sans','Noto_Sans',sans-serif]">
                    <span>6 Elemente</span>
                    <span>1 Element ausgewählt (406 Bytes)</span>
                </div>
            </div>
            <RemoteWindow />
            <div className="w-2 shrink-0 overflow-hidden bg-linear-to-r from-[#aaa] to-[#f0f0f2] to-70%">
                <div className="h-[55px] pt-[31px] border-b border-[#ccc]">
                    <div className="-ml-[14px] size-5 rounded-full bg-[#1464b4]" />
                </div>
                <div className="h-[113px] border-b border-[#bbb]" />
                <div className="h-[54px] border-b border-[#999]" />
            </div>
        </div>
        <div className="h-[10px] shrink-0 flex items-start bg-[#d0e3ea] overflow-hidden">
            <span className="w-[358px] h-full ml-[57px] bg-white" />
            <span className="w-[50px] h-full ml-auto bg-[#edf3f7]" />
            <span className="ml-[378px] mr-[91px] text-[13px] leading-5 font-['Open_Sans',sans-serif]">08:37</span>
        </div>
        <svg viewBox="0 0 1916 1038" preserveAspectRatio="none" className="absolute inset-0 size-full pointer-events-none">
            {strokes.map((pts, i) => (
                <path key={i} d={smooth(pts)} fill="none" stroke="#e60f0f" strokeWidth="2.500" strokeLinecap="round" />
            ))}
        </svg>
    </main>
)

export default App
